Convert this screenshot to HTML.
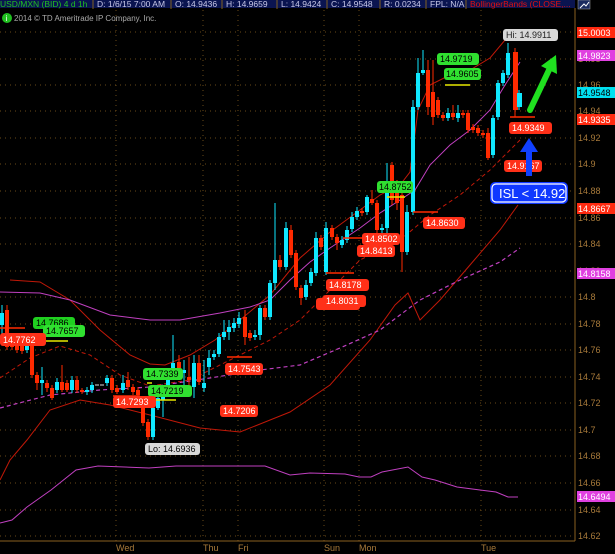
<!DOCTYPE html>
<html><head><meta charset="utf-8"><style>
body{margin:0;background:#000;width:615px;height:554px;overflow:hidden;font-family:"Liberation Sans",sans-serif}
svg{display:block}
</style></head><body>
<svg width="615" height="554" viewBox="0 0 615 554" font-family="Liberation Sans, sans-serif">
<rect width="615" height="554" fill="#000"/>
<g stroke="#6a4a18" stroke-width="1" stroke-dasharray="1,4">
<line x1="116" y1="10" x2="116" y2="541"/><line x1="203" y1="10" x2="203" y2="541"/><line x1="238" y1="10" x2="238" y2="541"/>
<line x1="324" y1="10" x2="324" y2="541"/><line x1="359" y1="10" x2="359" y2="541"/><line x1="481" y1="10" x2="481" y2="541"/>
<line x1="0" y1="32" x2="575" y2="32"/><line x1="0" y1="59" x2="575" y2="59"/><line x1="0" y1="85" x2="575" y2="85"/><line x1="0" y1="111" x2="575" y2="111"/>
<line x1="0" y1="138" x2="575" y2="138"/><line x1="0" y1="164" x2="575" y2="164"/><line x1="0" y1="191" x2="575" y2="191"/><line x1="0" y1="218" x2="575" y2="218"/>
<line x1="0" y1="244" x2="575" y2="244"/><line x1="0" y1="271" x2="575" y2="271"/><line x1="0" y1="297" x2="575" y2="297"/><line x1="0" y1="324" x2="575" y2="324"/>
<line x1="0" y1="350" x2="575" y2="350"/><line x1="0" y1="377" x2="575" y2="377"/><line x1="0" y1="403" x2="575" y2="403"/><line x1="0" y1="430" x2="575" y2="430"/>
<line x1="0" y1="456" x2="575" y2="456"/><line x1="0" y1="483" x2="575" y2="483"/><line x1="0" y1="510" x2="575" y2="510"/><line x1="0" y1="536" x2="575" y2="536"/>
</g>
<line x1="575" y1="8" x2="575" y2="541" stroke="#8a6020"/>
<line x1="0" y1="541" x2="575" y2="541" stroke="#8a6020"/>
<g fill="#a87a3a" font-size="9">
<text x="578" y="62">14.98</text><text x="578" y="88">14.96</text><text x="578" y="114">14.94</text><text x="578" y="141">14.92</text>
<text x="578" y="167">14.9</text><text x="578" y="194">14.88</text><text x="578" y="221">14.86</text><text x="578" y="247">14.84</text>
<text x="578" y="274">14.82</text><text x="578" y="300">14.8</text><text x="578" y="327">14.78</text><text x="578" y="353">14.76</text>
<text x="578" y="380">14.74</text><text x="578" y="406">14.72</text><text x="578" y="433">14.7</text><text x="578" y="459">14.68</text>
<text x="578" y="486">14.66</text><text x="578" y="513">14.64</text><text x="578" y="539">14.62</text>
<text x="116" y="551">Wed</text><text x="203" y="551">Thu</text><text x="238" y="551">Fri</text><text x="324" y="551">Sun</text><text x="359" y="551">Mon</text><text x="481" y="551">Tue</text>
</g>
<g font-size="9" fill="#fff">
<rect x="577" y="27" width="38" height="11" fill="#ff2a10"/><text x="578" y="36">15.0003</text>
<rect x="577" y="50" width="38" height="11" fill="#e040e0"/><text x="578" y="59">14.9823</text>
<rect x="577" y="87" width="38" height="11" fill="#00e0f0"/><text x="578" y="96" fill="#000">14.9548</text>
<rect x="577" y="114" width="38" height="11" fill="#ff2a10"/><text x="578" y="123">14.9335</text>
<rect x="577" y="203" width="38" height="11" fill="#ff2a10"/><text x="578" y="212">14.8667</text>
<rect x="577" y="268" width="38" height="11" fill="#e040e0"/><text x="578" y="277">14.8158</text>
<rect x="577" y="491" width="38" height="11" fill="#e040e0"/><text x="578" y="500">14.6494</text>
</g>
<polyline fill="none" stroke="#c01808" stroke-width="1" points="10,280 40,282 70,300 100,330 130,355 150,364 165,365 190,355 215,340 240,320 270,295 300,258 330,232 360,210 380,195 400,185 410,172 418,110 430,85 450,75 470,70 490,58 505,40 515,34"/>
<polyline fill="none" stroke="#c01808" stroke-width="1" points="0,480 10,460 27,440 50,410 80,400 110,405 150,415 200,428 240,432 290,412 330,385 370,340 395,305 408,293 420,320 440,300 470,265 500,230 518,205"/>
<polyline fill="none" stroke="#c01808" stroke-width="1" stroke-dasharray="4,3" points="0,378 30,358 60,346 90,355 120,375 150,386 190,380 230,360 270,340 300,320 330,290 360,260 400,240 430,215 460,195 490,170 520,140"/>
<polyline fill="none" stroke="#c040c0" stroke-width="1" points="0,292 40,293 70,300 110,315 150,320 180,320 220,313 250,307 270,300 290,280 310,262 330,248 360,228 380,213 400,200 415,190 430,165 450,145 470,130 490,110 505,85 520,62"/>
<polyline fill="none" stroke="#c040c0" stroke-width="1.2" stroke-dasharray="4,3" points="0,408 50,395 100,390 150,387 210,378 260,370 300,365 340,348 380,330 420,300 460,280 500,262 520,248"/>
<polyline fill="none" stroke="#c040c0" stroke-width="1" points="0,523 12,520 27,507 51,490 76,470 98,466 149,468 176,466 265,466 290,475 310,473 345,474 359,477 371,477 382,472 408,467 422,477 435,480 457,487 480,490 496,492 508,497 518,497"/>
<g fill="#ff2a00" stroke="#ff2a00" stroke-width="1">
<path d="M7 305V350M12 340V350M17 342V353M22 342V354M32 340V378M37 372V390M47 380V392M52 385V400M62 365V392M67 380V392M77 376V393M82 388V394M112 375V393M117 385V394M128 372V390M133 384V395M138 387V397M143 404V426M148 419V440M179 355V380M189 357V385M199 355V385M245 310V345M250 330V341M265 305V320M280 255V270M291 225V258M296 250V290M301 285V305M321 235V250M332 225V240M337 234V250M362 208V216M372 190V205M377 200V233M392 162V205M397 180V210M402 190V272M428 60V115M433 60V125M438 97V118M443 112V121M453 105V120M463 110V118M468 110V133M473 124V133M478 125V136M483 130V138M488 128V160M515 48V117"/>
<g stroke="none">
<rect x="5" y="310" width="4" height="37"/><rect x="10" y="343" width="4" height="4"/><rect x="15" y="345" width="4" height="5"/><rect x="20" y="345" width="4" height="6"/><rect x="30" y="343" width="4" height="32"/><rect x="35" y="375" width="4" height="8"/><rect x="45" y="383" width="4" height="5"/><rect x="50" y="388" width="4" height="10"/><rect x="60" y="382" width="4" height="8"/><rect x="65" y="383" width="4" height="7"/><rect x="75" y="380" width="4" height="10"/><rect x="80" y="390" width="4" height="2"/><rect x="110" y="378" width="4" height="12"/><rect x="115" y="388" width="4" height="4"/><rect x="126" y="380" width="4" height="7"/><rect x="131" y="387" width="4" height="5"/><rect x="136" y="390" width="4" height="5"/><rect x="141" y="407" width="4" height="16"/><rect x="146" y="422" width="4" height="15"/><rect x="177" y="362" width="4" height="15"/><rect x="187" y="377" width="4" height="3"/><rect x="197" y="363" width="4" height="19"/><rect x="243" y="317" width="4" height="20"/><rect x="248" y="333" width="4" height="5"/><rect x="263" y="308" width="4" height="9"/><rect x="278" y="260" width="4" height="7"/><rect x="289" y="230" width="4" height="25"/><rect x="294" y="253" width="4" height="34"/><rect x="299" y="288" width="4" height="10"/><rect x="319" y="238" width="4" height="9"/><rect x="330" y="228" width="4" height="9"/><rect x="335" y="237" width="4" height="6"/><rect x="360" y="211" width="4" height="2"/><rect x="370" y="199" width="4" height="4"/><rect x="375" y="203" width="4" height="27"/><rect x="390" y="165" width="4" height="35"/><rect x="395" y="192" width="4" height="11"/><rect x="400" y="195" width="4" height="57"/><rect x="426" y="70" width="4" height="37"/><rect x="431" y="92" width="4" height="25"/><rect x="436" y="100" width="4" height="15"/><rect x="441" y="115" width="4" height="3"/><rect x="451" y="113" width="4" height="4"/><rect x="461" y="113" width="4" height="2"/><rect x="466" y="113" width="4" height="17"/><rect x="471" y="127" width="4" height="3"/><rect x="476" y="128" width="4" height="5"/><rect x="481" y="133" width="4" height="2"/><rect x="486" y="133" width="4" height="25"/><rect x="513" y="52" width="5" height="58"/>
</g></g>
<g fill="#10e8ff" stroke="#10e8ff" stroke-width="1">
<path d="M2 305V335M27 340V353M42 367V395M57 378V393M72 376V393M87 387V395M92 382V393M107 375V386M123 375V393M153 405V440M158 393V410M163 385V417M168 368V396M173 335V375M184 360V385M194 355V398M204 360V392M209 350V375M214 350V360M219 333V357M224 320V340M229 320V340M234 318V332M239 312V328M255 330V340M260 305V340M270 280V320M275 203V290M286 222V270M306 280V300M311 268V286M316 232V276M326 222V275M342 236V248M347 226V243M352 212V232M357 207V220M367 195V215M382 224V233M387 163V235M407 205V255M413 100V215M418 58V110M423 50V75M448 108V121M458 105V122M493 115V158M498 80V120M503 70V86M508 43V78M519 90V110"/>
<g stroke="none">
<rect x="0" y="313" width="4" height="12"/><rect x="25" y="343" width="4" height="7"/><rect x="40" y="380" width="4" height="3"/><rect x="55" y="382" width="4" height="8"/><rect x="70" y="380" width="4" height="10"/><rect x="85" y="390" width="4" height="2"/><rect x="90" y="385" width="4" height="5"/><rect x="105" y="378" width="4" height="5"/><rect x="121" y="383" width="4" height="7"/><rect x="151" y="408" width="4" height="29"/><rect x="156" y="398" width="4" height="10"/><rect x="161" y="392" width="4" height="8"/><rect x="166" y="372" width="4" height="21"/><rect x="171" y="363" width="4" height="9"/><rect x="182" y="370" width="4" height="3"/><rect x="192" y="363" width="4" height="24"/><rect x="202" y="383" width="4" height="5"/><rect x="207" y="358" width="4" height="9"/><rect x="212" y="354" width="4" height="3"/><rect x="217" y="337" width="4" height="17"/><rect x="222" y="332" width="4" height="5"/><rect x="227" y="327" width="4" height="5"/><rect x="232" y="323" width="4" height="5"/><rect x="237" y="318" width="4" height="6"/><rect x="253" y="335" width="4" height="2"/><rect x="258" y="308" width="4" height="27"/><rect x="268" y="283" width="4" height="34"/><rect x="273" y="260" width="4" height="23"/><rect x="284" y="228" width="4" height="39"/><rect x="304" y="285" width="4" height="12"/><rect x="309" y="272" width="4" height="11"/><rect x="314" y="238" width="4" height="35"/><rect x="324" y="228" width="4" height="44"/><rect x="340" y="240" width="4" height="5"/><rect x="345" y="230" width="4" height="10"/><rect x="350" y="217" width="4" height="12"/><rect x="355" y="211" width="4" height="6"/><rect x="365" y="197" width="4" height="15"/><rect x="380" y="228" width="4" height="2"/><rect x="385" y="183" width="4" height="45"/><rect x="405" y="212" width="4" height="40"/><rect x="411" y="107" width="4" height="105"/><rect x="416" y="73" width="4" height="34"/><rect x="421" y="70" width="4" height="3"/><rect x="446" y="113" width="4" height="5"/><rect x="456" y="113" width="4" height="5"/><rect x="491" y="118" width="4" height="37"/><rect x="496" y="83" width="4" height="34"/><rect x="501" y="73" width="4" height="10"/><rect x="506" y="53" width="4" height="22"/><rect x="517" y="93" width="5" height="14"/>
</g></g>
<g stroke="#ddd"><path d="M95 385H99M100 385H104"/></g>
<g stroke-width="1.5">
<path d="M0 328H25M113 396H140M227 357H252M326 273H354M343 238H368M413 212H438M510 117H535" stroke="#ff2a00"/>
<path d="M45 341H68M153 400H176M445 85H470M387 197H405M147 383H152" stroke="#e8e800"/>
</g>
<g font-size="9" fill="#fff">
<rect x="33" y="317" width="42" height="12" rx="3" fill="#20d020"/><text x="36" y="326" fill="#000">14.7686</text>
<rect x="43" y="325" width="42" height="12" rx="3" fill="#30e030"/><text x="46" y="334" fill="#000">14.7657</text>
<rect x="0" y="333" width="46" height="13" rx="3" fill="#ff3018"/><text x="3" y="343">14.7762</text>
<rect x="143" y="368" width="40" height="12" rx="3" fill="#30e030"/><text x="146" y="377" fill="#000">14.7339</text>
<rect x="148" y="385" width="44" height="12" rx="3" fill="#30e030"/><text x="151" y="394" fill="#000">14.7219</text>
<rect x="113" y="396" width="43" height="12" rx="3" fill="#ff3018"/><text x="116" y="405">14.7293</text>
<rect x="145" y="443" width="55" height="12" rx="3" fill="#d8d8d8"/><text x="148" y="452" fill="#000">Lo: 14.6936</text>
<rect x="225" y="363" width="38" height="12" rx="3" fill="#ff3018"/><text x="228" y="372">14.7543</text>
<rect x="220" y="405" width="38" height="12" rx="3" fill="#ff3018"/><text x="223" y="414">14.7206</text>
<rect x="316" y="298" width="44" height="12" rx="3" fill="#ff3018"/>
<rect x="326" y="279" width="43" height="12" rx="3" fill="#ff3018"/><text x="329" y="288">14.8178</text>
<rect x="323" y="295" width="43" height="12" rx="3" fill="#ff3018"/><text x="326" y="304">14.8031</text>
<rect x="362" y="233" width="38" height="12" rx="3" fill="#ff3018"/><text x="365" y="242">14.8502</text>
<rect x="357" y="245" width="38" height="12" rx="3" fill="#ff3018"/><text x="360" y="254">14.8413</text>
<rect x="377" y="181" width="36" height="12" rx="3" fill="#30e030"/><text x="379" y="190" fill="#000">14.8752</text>
<rect x="423" y="217" width="42" height="12" rx="3" fill="#ff3018"/><text x="426" y="226">14.8630</text>
<rect x="437" y="53" width="42" height="12" rx="3" fill="#30e030"/><text x="440" y="62" fill="#000">14.9719</text>
<rect x="444" y="68" width="37" height="12" rx="3" fill="#30e030"/><text x="446" y="77" fill="#000">14.9605</text>
<rect x="503" y="29" width="55" height="12" rx="3" fill="#d8d8d8"/><text x="506" y="38" fill="#222">Hi: 14.9911</text>
<rect x="509" y="122" width="43" height="12" rx="3" fill="#ff3018"/><text x="512" y="131">14.9349</text>
<rect x="504" y="160" width="38" height="12" rx="3" fill="#ff3018"/><text x="507" y="169">14.9167</text>
</g>
<path d="M529 176V150" stroke="#1040ff" stroke-width="6"/>
<path d="M520 152L529 138L538 152Z" fill="#1040ff"/>
<path d="M530 110L549 70" stroke="#20e020" stroke-width="6" stroke-linecap="round"/>
<path d="M541 66L556 55L557 74Z" fill="#20e020"/>
<rect x="490" y="182" width="78" height="22" rx="5" fill="#1038ff"/>
<rect x="492" y="184" width="74" height="18" rx="4" fill="#1038ff" stroke="#fff" stroke-width="1.2"/>
<text x="499" y="198" font-size="13" fill="#fff">ISL &lt; 14.92</text>
<rect x="0" y="0" width="575" height="8" fill="#0a1450"/>
<g font-size="8.5" fill="#c8c8e8">
<text x="0" y="7" fill="#20c020">USD/MXN (BID) 4 d 1h</text>
<text x="97" y="7">D: 1/6/15 7:00 AM</text><text x="175" y="7">O: 14.9436</text><text x="226" y="7">H: 14.9659</text>
<text x="281" y="7">L: 14.9424</text><text x="331" y="7">C: 14.9548</text><text x="384" y="7">R: 0.0234</text>
<text x="430" y="7">FPL: N/A</text><text x="470" y="7" fill="#e01010">BollingerBands (CLOSE,...</text>
</g>
<g stroke="#806020"><path d="M93 0V9M171 0V9M222 0V9M277 0V9M327 0V9M380 0V9M426 0V9M466 0V9"/></g>
<rect x="578" y="0" width="12" height="9" fill="#1a2a60" stroke="#aaa" stroke-width="0.5"/>
<path d="M580 8L584 4L586 6L589 2" stroke="#fff" fill="none"/>
<circle cx="7" cy="18" r="5" fill="#20c020"/><text x="5.5" y="21" font-size="8" fill="#fff">i</text>
<text x="14" y="21" font-size="8" fill="#aaa">2014 © TD Ameritrade IP Company, Inc.</text>
</svg>
</body></html>
